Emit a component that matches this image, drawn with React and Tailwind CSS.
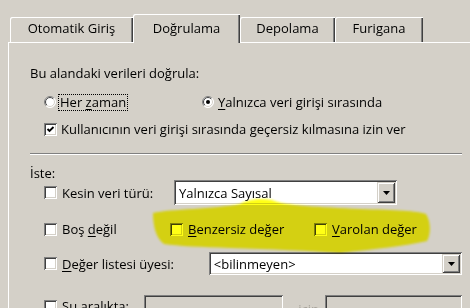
import React from "react";

const sunken =
  "shadow-[inset_1px_1px_0_#808080,inset_-1px_-1px_0_#ffffff,inset_2px_2px_0_#404040,inset_-2px_-2px_0_#d4d0c8]";
const raised =
  "shadow-[inset_1px_1px_0_#d4d0c8,inset_-1px_-1px_0_#404040,inset_2px_2px_0_#ffffff,inset_-2px_-2px_0_#808080]";

const Check = ({ checked }) => (
  <span className={`relative block w-[13px] h-[13px] shrink-0 bg-white ${sunken}`}>
    {checked && (
      <svg className="absolute inset-0" width="13" height="13" viewBox="0 0 13 13">
        <path d="M3.5 6 L5.5 8 L9.5 4" fill="none" stroke="#000" strokeWidth="1.8" />
      </svg>
    )}
  </span>
);

const Radio = ({ checked }) => (
  <svg width="12" height="12" viewBox="0 0 12 12" className="shrink-0">
    <defs>
      <linearGradient id="rOut" x1="0" y1="0" x2="1" y2="1">
        <stop offset="0.45" stopColor="#808080" />
        <stop offset="0.55" stopColor="#ffffff" />
      </linearGradient>
      <linearGradient id="rIn" x1="0" y1="0" x2="1" y2="1">
        <stop offset="0.45" stopColor="#404040" />
        <stop offset="0.55" stopColor="#d4d0c8" />
      </linearGradient>
    </defs>
    <circle cx="6" cy="6" r="5.5" fill="#fff" stroke="url(#rOut)" strokeWidth="1" />
    <circle cx="6" cy="6" r="4.5" fill="#fff" stroke="url(#rIn)" strokeWidth="1" />
    {checked && <circle cx="6" cy="6" r="2" fill="#000" />}
  </svg>
);

const Select = ({ value, className }) => (
  <div className={`flex items-stretch bg-white p-[2px] ${sunken} ${className}`}>
    <span className="flex-1 flex items-center pl-[3px] leading-[16px]">{value}</span>
    <span className={`w-[18px] bg-[#d4d0c8] flex items-center justify-center ${raised}`}>
      <svg width="7" height="4" viewBox="0 0 7 4">
        <path d="M0 0h7L3.5 4z" fill="#000" />
      </svg>
    </span>
  </div>
);

const Tab = ({ label, width, active }) => (
  <div
    className={`flex justify-center shrink-0 rounded-tl-[2px] shadow-[inset_1px_1px_0_#ffffff,inset_-1px_0_0_#404040,inset_-2px_0_0_#808080] ${
      active ? "relative z-10 h-[29px] pt-[6px] -mb-[1px] bg-[#d4d0c8]" : "h-[25px] pt-[3px]"
    }`}
    style={{ width }}
  >
    <span className="leading-[16px]">{label}</span>
  </div>
);

const U = ({ children }) => <span className="underline underline-offset-2">{children}</span>;

export default function App() {
  return (
    <div className="relative w-[470px] h-[308px] overflow-hidden bg-[#d4d0c8] text-black text-[13px] font-['Open_Sans',sans-serif]">
      <div className="flex items-end h-[42px] pl-[10px]">
        <Tab label="Otomatik Giriş" width={123} />
        <Tab label="Doğrulama" width={107} active />
        <Tab label="Depolama" width={95} />
        <Tab label="Furigana" width={88} />
      </div>

      <div className="ml-[8px] h-[300px] border-t border-l border-white pl-[21px] pr-[8px]">
        <div className="mt-[22px] h-[16px] leading-[16px]">Bu alandaki verileri doğrula:</div>

        <div className="mt-[12px] ml-[14px] h-[18px] flex items-center">
          <div className="w-[158px] flex items-center">
            <Radio />
            <span className="ml-[2px] px-[1px] leading-[15px] border border-dotted border-black">
              Her <U>z</U>aman
            </span>
          </div>
          <Radio checked />
          <span className="ml-[4px] leading-[16px]">
            <U>Y</U>alnızca veri girişi sırasında
          </span>
        </div>

        <div className="mt-[9px] ml-[14px] h-[18px] flex items-center">
          <Check checked />
          <span className="ml-[4px] leading-[16px]">
            Kullanıcının veri girişi sırasında <U>g</U>eçersiz kılmasına izin ver
          </span>
        </div>

        <div className="mt-[15px] h-[2px] border-t border-b border-t-[#808080] border-b-white" />

        <div className="mt-[11px] h-[14px] flex items-center leading-[16px]">İste:</div>

        <div className="ml-[14px] h-[25px] flex items-center">
          <div className="w-[130px] flex items-center">
            <Check />
            <span className="ml-[5px] leading-[16px]">Kesin veri türü:</span>
          </div>
          <Select value="Yalnızca Sayısal" className="w-[223px] h-[25px]" />
        </div>

        <div className="mt-[15px] ml-[14px] h-[18px] flex items-center">
          <div className="w-[126px] flex items-center">
            <Check />
            <span className="ml-[5px] leading-[16px]">
              Boş <U>d</U>eğil
            </span>
          </div>
          <div className="w-[144px] flex items-center">
            <Check />
            <span className="ml-[5px] leading-[16px]">
              <U>B</U>enzersiz değer
            </span>
          </div>
          <Check />
          <span className="ml-[5px] leading-[16px]">
            <U>V</U>arolan değer
          </span>
        </div>

        <div className="mt-[14px] ml-[14px] h-[23px] flex items-center">
          <div className="w-[166px] flex items-center">
            <Check />
            <span className="ml-[5px] leading-[16px]">
              <U>D</U>eğer listesi üyesi:
            </span>
          </div>
          <Select value="<bilinmeyen>" className="w-[255px] h-[23px]" />
        </div>

        <div className="mt-[20px] ml-[14px] h-[22px] flex items-start">
          <div className="w-[101px] flex items-center pt-[3px]">
            <Check />
            <span className="ml-[5px] leading-[16px]">Şu aralıkta:</span>
          </div>
          <div className={`w-[140px] h-[22px] bg-[#d4d0c8] ${sunken}`} />
          <span className="w-[42px] pl-[15px] pt-[6px] leading-[16px] text-[#a8a49c]">için</span>
          <div className={`w-[138px] h-[22px] bg-[#d4d0c8] ${sunken}`} />
        </div>
      </div>

      <svg
        className="absolute inset-0 z-20 pointer-events-none mix-blend-multiply"
        width="470"
        height="308"
        viewBox="0 0 470 308"
      >
        <defs>
          <filter id="soft">
            <feGaussianBlur stdDeviation="0.8" />
          </filter>
        </defs>
        <path
          filter="url(#soft)"
          fill="#ffff14"
          d="M153 213 C170 209 215 209 240 204 C248 199 262 198 272 200 C285 206 320 207 360 209 C395 210 418 211 426 214 C431 222 431 234 427 241 C405 246 375 249 340 253 C310 251 270 249 230 248 C200 247 178 246 164 244 C156 238 153 226 153 213 Z"
        />
      </svg>
    </div>
  );
}
